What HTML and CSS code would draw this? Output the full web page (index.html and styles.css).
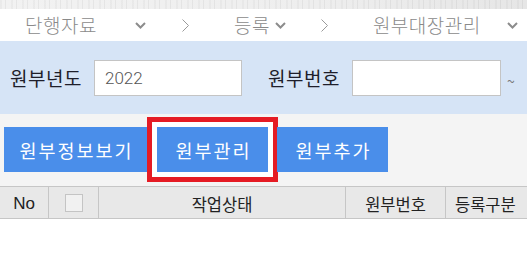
FILE: index.html
```html
<!DOCTYPE html>
<html>
<head>
  <link rel="stylesheet" href="styles.css">
</head>
<body>
  <div class="strip"></div>
  <nav class="crumbs">
    <span class="crumb first">단행자료</span>
    <svg class="chev c1" width="11" height="7" viewBox="0 0 11 7"><path d="M1 1l4.5 4.5L10 1" fill="none" stroke="#8c8c8c" stroke-width="2"/></svg>
    <svg class="sep s1" width="7" height="13" viewBox="0 0 7 13"><path d="M0.5 0.5l6 6-6 6" fill="none" stroke="#9a9a9a" stroke-width="1"/></svg>
    <span class="crumb second">등록</span>
    <svg class="chev c2" width="11" height="7" viewBox="0 0 11 7"><path d="M1 1l4.5 4.5L10 1" fill="none" stroke="#8c8c8c" stroke-width="2"/></svg>
    <svg class="sep s2" width="7" height="13" viewBox="0 0 7 13"><path d="M0.5 0.5l6 6-6 6" fill="none" stroke="#9a9a9a" stroke-width="1"/></svg>
    <span class="crumb third">원부대장관리</span>
    <svg class="chev c3" width="11" height="7" viewBox="0 0 11 7"><path d="M1 1l4.5 4.5L10 1" fill="none" stroke="#8c8c8c" stroke-width="2"/></svg>
  </nav>

  <div class="search">
    <label class="label l1">원부년도</label>
    <input class="field f1" type="text" value="2022">
    <label class="label l2">원부번호</label>
    <input class="field f2" type="text" value="">
    <span class="tilde">~</span>
  </div>

  <div class="toolbar">
    <button class="btn wide">원부정보보기</button>
    <button class="btn marked">원부관리</button>
    <button class="btn">원부추가</button>
  </div>

  <div class="grid-head">
    <div class="col no">No</div>
    <div class="col check"><span class="box"></span></div>
    <div class="col">작업상태</div>
    <div class="col">원부번호</div>
    <div class="col">등록구분</div>
  </div>
</body>
</html>
```

FILE: styles.css
```css
body {
  margin: 0;
  background: #fff;
  font-family: "Noto Sans CJK KR", sans-serif;
  overflow: hidden;
}

.strip {
  height: 9px;
  background:
    repeating-linear-gradient(90deg, rgba(0,0,0,0.03) 0 2px, transparent 2px 5px, rgba(0,0,0,0.05) 5px 6px, transparent 6px 11px),
    linear-gradient(90deg, #f2f2f2 0%, #eeeeee 60%, #e6e6e6 100%);
}

.crumbs {
  height: 32px;
  display: flex;
  align-items: center;
  background: #fff;
  white-space: nowrap;
}

.crumb {
  font-size: 19px;
  letter-spacing: 0.5px;
  color: #8a8a8a;
  font-weight: 300;
  line-height: 28px;
}

.first { margin-left: 25px; }
.c1 { margin-left: 38px; }
.s1 { margin-left: 36px; }
.second { margin-left: 45px; }
.c2 { margin-left: 5px; }
.s2 { margin-left: 35px; }
.third { margin-left: 45px; }
.c3 { margin-left: 26px; }

.chev, .sep {
  flex: none;
}

.search {
  height: 73px;
  display: flex;
  align-items: center;
  background: #d6e4f6;
  white-space: nowrap;
}

.label {
  font-size: 19px;
  letter-spacing: 0.5px;
  color: #1e1e2a;
  width: 74px;
}

.l1 { margin-left: 10px; }
.l2 { margin-left: 26px; }

.field {
  box-sizing: border-box;
  height: 36px;
  border: 1px solid #c4c4c4;
  background: #fff;
  padding: 0 10px;
  font-family: Roboto, "Noto Sans", sans-serif;
  font-weight: 300;
  font-size: 17px;
  color: #555;
  outline: none;
}

.f1 { margin-left: 10px; width: 148px; }
.f2 { margin-left: 10px; width: 149px; }

.tilde {
  margin-left: 6px;
  margin-top: 6px;
  color: #777;
  font-size: 14px;
}

.toolbar {
  height: 72px;
  box-sizing: border-box;
  padding: 13px 0 0 4px;
  background: #f4f4f4;
  display: flex;
  align-items: flex-start;
}

.btn {
  height: 45px;
  width: 111px;
  border: none;
  padding: 0;
  background: #4a8eea;
  color: #fff;
  font-family: "Noto Sans CJK KR", sans-serif;
  font-size: 18.5px;
  letter-spacing: 2px;
  text-indent: 2px;
  margin-left: 9px;
}

.btn.wide {
  width: 143px;
  margin-left: 0;
}

.btn.marked {
  margin-left: 10px;
  box-shadow: 0 0 0 5px #fff, 0 0 0 10px #e51b24;
}

.grid-head {
  display: grid;
  grid-template-columns: 48px 50px 247px 100px 1fr;
  height: 31px;
  border-top: 1px solid #c6c6c6;
  border-bottom: 1px solid #c6c6c6;
  background: #e8e8e8;
  white-space: nowrap;
  overflow: hidden;
}

.col {
  display: flex;
  align-items: center;
  justify-content: center;
  font-size: 16.5px;
  color: #222;
  border-left: 1px solid #c6c6c6;
  padding-top: 3px;
}

.col.no {
  border-left: none;
  font-family: "Liberation Sans", sans-serif;
  font-size: 17px;
}

.col:last-child {
  justify-content: flex-start;
  padding-left: 9px;
}

.box {
  width: 18px;
  height: 18px;
  box-sizing: border-box;
  border: 1px solid #c4c4c4;
  background: #f1f1f1;
  margin-top: -3px;
}
```
